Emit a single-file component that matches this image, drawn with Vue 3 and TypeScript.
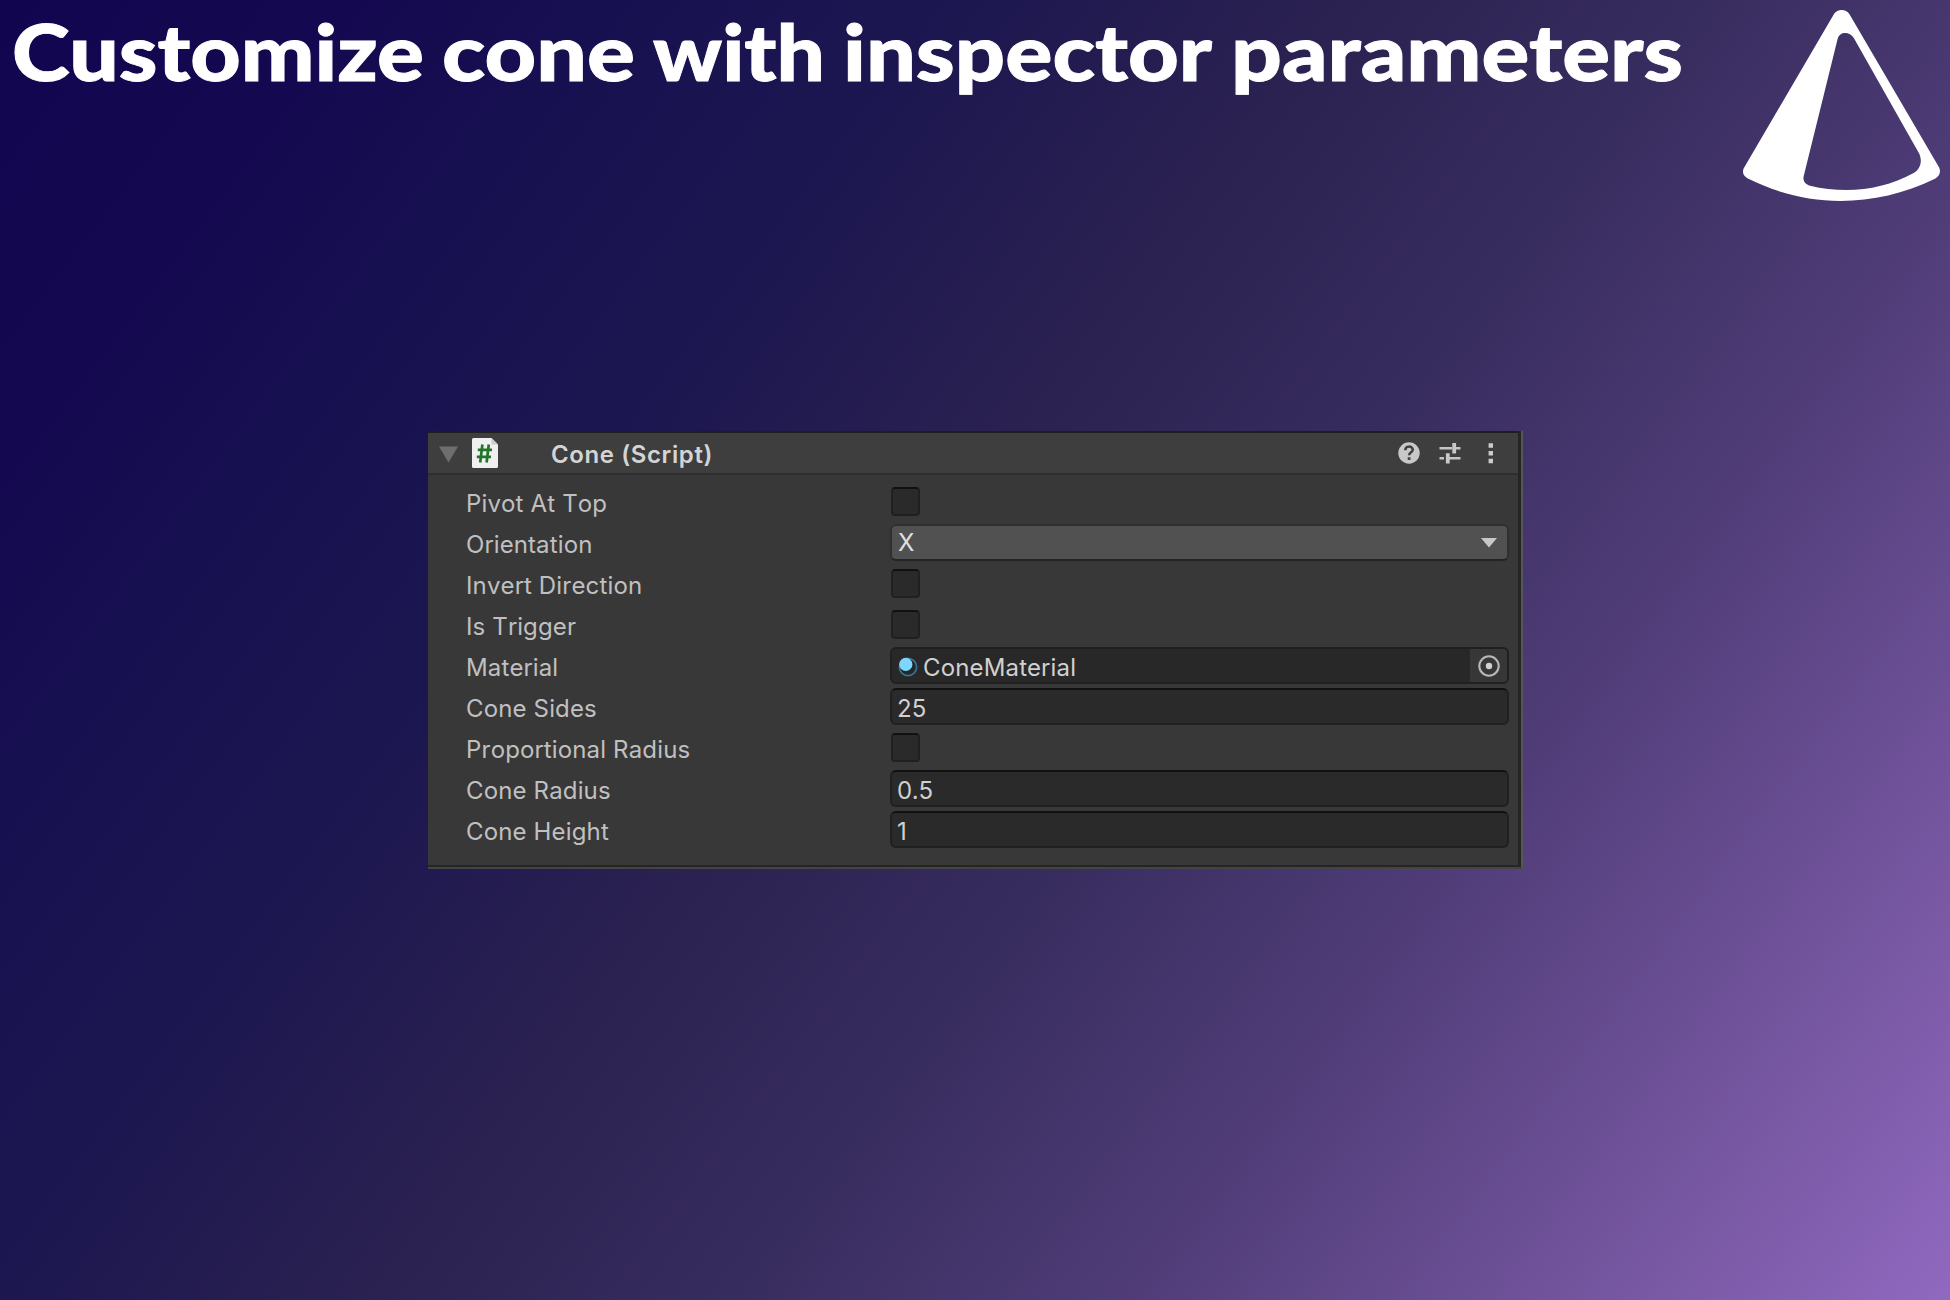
<script setup lang="ts">
interface TitleWord { text: string; x: number; width: number }
interface Field { label: string; kind: 'check' | 'select' | 'object' | 'input'; value?: string }

const words: TitleWord[] = [
  { text: 'Customize', x: 12, width: 412 },
  { text: 'cone', x: 442, width: 193 },
  { text: 'with', x: 653, width: 172 },
  { text: 'inspector', x: 843, width: 369 },
  { text: 'parameters', x: 1231, width: 452 },
]

const fields: Field[] = [
  { label: 'Pivot At Top', kind: 'check' },
  { label: 'Orientation', kind: 'select', value: 'X' },
  { label: 'Invert Direction', kind: 'check' },
  { label: 'Is Trigger', kind: 'check' },
  { label: 'Material', kind: 'object', value: 'ConeMaterial' },
  { label: 'Cone Sides', kind: 'input', value: '25' },
  { label: 'Proportional Radius', kind: 'check' },
  { label: 'Cone Radius', kind: 'input', value: '0.5' },
  { label: 'Cone Height', kind: 'input', value: '1' },
]
</script>

<template>
  <main class="slide">
    <header class="top">
      <svg class="title" viewBox="0 0 1720 120" role="heading" aria-level="1">
        <text
          v-for="w in words"
          :key="w.text"
          :x="w.x"
          y="81"
          :textLength="w.width"
          lengthAdjust="spacingAndGlyphs"
        >{{ w.text }}</text>
      </svg>
      <svg class="logo" viewBox="0 0 690 660">
        <path
          fill="#fff"
          fill-rule="evenodd"
          d="M342 42C352 26 378 26 388 42L657 502C664 516 658 528 645 536C460 625 260 625 82 535C69 527 65 514 73 502ZM353 116C358 94 389 93 401 113L597 460C608 482 602 507 581 519C485 572 375 582 270 557C256 553 248 543 251 529Z"
        />
      </svg>
    </header>

    <section class="panel">
      <div class="head">
        <svg class="fold" viewBox="0 0 20 17"><path d="M0 0H20L10 17Z" fill="#6e6e6e" /></svg>
        <svg class="script" viewBox="0 0 26 30">
          <path d="M1.5 0H19.5L26 6.5V28.5Q26 30 24.5 30H1.5Q0 30 0 28.5V1.5Q0 0 1.5 0Z" fill="#f0f0f0" />
          <path d="M19.5 0V6.5H26Z" fill="#c9cdc9" />
          <path d="M10.4 6.5L8.2 24.5M16.8 6.5L14.6 24.5M5.8 11.8H20M4.8 18.8H19" stroke="#23752b" stroke-width="2.7" fill="none" />
        </svg>
        <span class="name">Cone (Script)</span>
        <svg class="tools" viewBox="0 0 110 30">
          <circle cx="19" cy="15" r="10.7" fill="#c8c8c8" />
          <path d="M15.3 12.2C15.3 7.4 22.8 7.6 22.8 11.8C22.8 14.4 19.1 14.3 19.1 17.3" stroke="#3e3e3e" stroke-width="2.5" fill="none" />
          <rect x="17.7" y="19.3" width="2.8" height="2.6" fill="#3e3e3e" />
          <path d="M49.5 10.2H62M66 10.2H70.5M49.5 20.3H54M58 20.3H70.5" stroke="#c4c4c4" stroke-width="2.5" fill="none" />
          <path d="M64.2 5V15.4M57.8 15.2V25.6" stroke="#c8c8c8" stroke-width="3.8" fill="none" />
          <path d="M98.6 5.3h4.4v4.4h-4.4zM98.6 13h4.4v4.4h-4.4zM98.6 20.8h4.4v4.4h-4.4z" fill="#cbcbcb" />
        </svg>
      </div>

      <div class="rows">
        <div v-for="f in fields" :key="f.label" class="row">
          <span class="label">{{ f.label }}</span>
          <span v-if="f.kind === 'check'" class="check"></span>
          <div v-else class="field" :class="f.kind">
            <svg v-if="f.kind === 'object'" class="ball" viewBox="0 0 20 20">
              <circle cx="10" cy="10" r="8.6" fill="#20292e" stroke="#3f7288" stroke-width="1.7" />
              <circle cx="7.8" cy="7.4" r="6.6" fill="#7fd6fd" />
            </svg>
            <span class="value">{{ f.value }}</span>
            <svg v-if="f.kind === 'select'" class="arrow" viewBox="0 0 16 10"><path d="M0 0H16L8 9.6Z" fill="#c8c8c8" /></svg>
            <span v-if="f.kind === 'object'" class="pick">
              <svg viewBox="0 0 24 24">
                <circle cx="12" cy="12" r="9.7" fill="none" stroke="#b8b8b8" stroke-width="2.1" />
                <circle cx="12" cy="12" r="3.2" fill="#d0d0d0" />
              </svg>
            </span>
          </div>
        </div>
      </div>
    </section>
  </main>
</template>

<style>
body {
  margin: 0;
}
</style>

<style scoped>
.slide {
  width: 1950px;
  height: 1300px;
  overflow: hidden;
  background: linear-gradient(
    126.8deg,
    #120550 0%,
    #140950 12%,
    #171150 22.3%,
    #1d1750 33.3%,
    #2b2251 46.3%,
    #372c5e 58%,
    #503d78 72%,
    #7a59a5 90%,
    #9069c0 100%
  );
  font-family: Inter, "Liberation Sans", sans-serif;
}
.top {
  display: flex;
  height: 431px;
}
.title {
  width: 1720px;
  height: 120px;
}
.title text {
  font: 900 78px Lato, sans-serif;
  fill: #fff;
  stroke: #fff;
  stroke-width: 0.9px;
}
.logo {
  width: 230px;
  height: 220px;
}
.panel {
  box-sizing: border-box;
  width: 1095px;
  height: 438px;
  margin-left: 428px;
  background: #383838;
  border-right: 2px solid #565656;
  border-bottom: 2px solid #444;
  box-shadow: inset -3px -2px 0 #252525;
}
.head {
  box-sizing: border-box;
  display: flex;
  align-items: center;
  width: 1090px;
  height: 44px;
  border-top: 2px solid #1e1e1e;
  border-bottom: 2px solid #2e2e2e;
  background: #3e3e3e;
}
.fold {
  width: 19px;
  height: 17px;
  margin: 2px 0 0 11px;
}
.script {
  width: 26px;
  height: 30px;
  margin-left: 14px;
}
.name {
  margin-left: 53px;
  padding-top: 3px;
  font-size: 24px;
  font-weight: 600;
  line-height: 30px;
  letter-spacing: 0.6px;
  color: #d4d4d4;
}
.tools {
  width: 110px;
  height: 30px;
  margin-left: auto;
  margin-right: 18px;
}
.rows {
  display: flex;
  flex-direction: column;
  gap: 4px;
  padding: 8px 0 0 38px;
}
.row {
  display: flex;
  align-items: center;
  height: 37px;
}
.label {
  width: 424px;
  padding-top: 4px;
  font-size: 24px;
  line-height: 30px;
  letter-spacing: 0.15px;
  font-kerning: none;
  color: #c0c0c0;
}
.check {
  box-sizing: border-box;
  width: 29px;
  height: 29px;
  margin-left: 1px;
  border: 2px solid #202020;
  border-top-color: #111;
  border-radius: 4px;
  background: #2a2a2a;
}
.field {
  box-sizing: border-box;
  display: flex;
  align-items: center;
  width: 619px;
  height: 37px;
  padding-left: 5px;
  border: 2px solid #202020;
  border-radius: 6px;
  background: #2a2a2a;
  font-size: 24px;
  line-height: 30px;
  letter-spacing: 0.15px;
  color: #d0d0d0;
}
.input {
  border-top-color: #111;
}
.input .value,
.object .value {
  padding-top: 4px;
}
.select {
  padding-left: 6px;
  border-color: #303030;
  border-bottom-color: #242424;
  background: #515151;
  color: #e0e0e0;
}
.arrow {
  width: 16px;
  height: 10px;
  margin: 1px 10px 0 auto;
}
.object {
  background: #282828;
}
.ball {
  width: 20px;
  height: 20px;
  margin: 2px 5px 0 1px;
}
.pick {
  display: flex;
  align-items: center;
  justify-content: center;
  width: 37px;
  height: 33px;
  margin-left: auto;
  border-radius: 0 4px 4px 0;
  background: #373737;
}
.pick svg {
  width: 24px;
  height: 24px;
}
</style>
